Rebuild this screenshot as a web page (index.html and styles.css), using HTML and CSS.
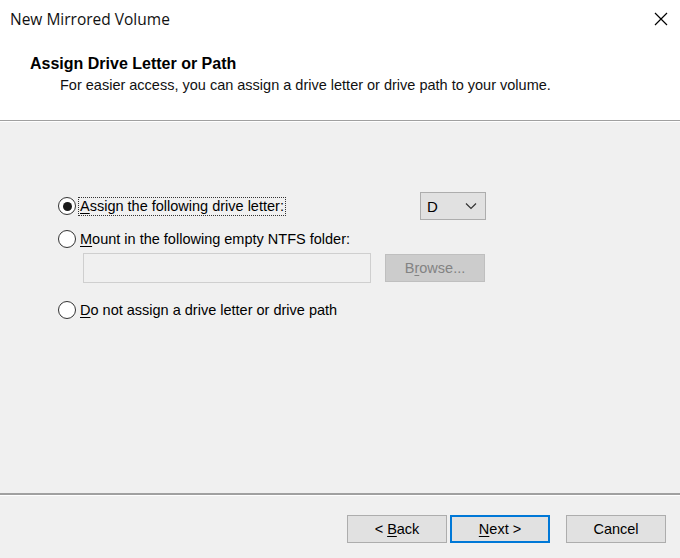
FILE: index.html
```html
<!DOCTYPE html>
<html>
<head>
<meta charset="utf-8">
<link rel="stylesheet" href="styles.css">
</head>
<body>
<div class="window">
  <div class="top">
    <div class="titlebar">
      <span class="title">New Mirrored Volume</span>
      <svg class="close" width="14" height="14" viewBox="0 0 14 14"><path d="M1 1 L13 13 M13 1 L1 13" stroke="#000" stroke-width="1.2" fill="none"/></svg>
    </div>
    <div class="header">
      <div class="h-title">Assign Drive Letter or Path</div>
      <div class="h-sub">For easier access, you can assign a drive letter or drive path to your volume.</div>
    </div>
  </div>
  <div class="body">
    <div class="row row1">
      <span class="radio checked"></span>
      <span class="label focus"><u>A</u>ssign the following drive letter:</span>
      <div class="select"><span>D</span><svg width="12" height="8" viewBox="0 0 12 8"><path d="M1 1.5 L6 6.5 L11 1.5" stroke="#333" stroke-width="1.2" fill="none"/></svg></div>
    </div>
    <div class="row row2">
      <span class="radio"></span>
      <span class="label"><u>M</u>ount in the following empty NTFS folder:</span>
    </div>
    <div class="row folder">
      <div class="input"></div>
      <div class="btn disabled"><span>B<u>r</u>owse...</span></div>
    </div>
    <div class="row row3">
      <span class="radio"></span>
      <span class="label"><u>D</u>o not assign a drive letter or drive path</span>
    </div>
  </div>
  <div class="footer">
    <div class="btn"><span>&lt; <u>B</u>ack</span></div>
    <div class="btn default"><span><u>N</u>ext &gt;</span></div>
    <div class="btn cancel"><span>Cancel</span></div>
  </div>
</div>
</body>
</html>
```
FILE: styles.css
```css
html, body {
  margin: 0;
  padding: 0;
}
body {
  font-family: "Liberation Sans", Arial, sans-serif;
  font-size: 14.5px;
  color: #000;
  background: #f0f0f0;
}
.window {
  width: 680px;
  height: 558px;
  display: flex;
  flex-direction: column;
  background: #f0f0f0;
  overflow: hidden;
}
.top {
  background: #fff;
  height: 120px;
  border-bottom: 1px solid #a0a0a0;
  box-shadow: 0 1px 0 #fff;
}
.titlebar {
  height: 38px;
  display: flex;
  align-items: center;
  justify-content: space-between;
  padding: 0 12px 0 10px;
}
.title {
  font-family: "Open Sans", "Noto Sans", sans-serif;
  font-size: 15.5px;
  color: #111;
}
.close {
  display: block;
}
.header {
  padding-top: 16px;
}
.h-title {
  padding-left: 30px;
  font-weight: bold;
  font-size: 16px;
  line-height: 20px;
}
.h-sub {
  padding-left: 60px;
  line-height: 22px;
  color: #111;
}
.body {
  flex: 1;
  padding: 71px 0 0 58px;
  border-bottom: 2px solid #a0a0a0;
  box-shadow: 0 1px 0 #fff;
}
.row {
  display: flex;
  align-items: center;
}
.row1 {
  height: 28px;
}
.row2 {
  height: 24px;
  margin-top: 7px;
}
.row3 {
  height: 24px;
  margin-top: 15px;
}
.radio {
  border: 1px solid #333;
  border-radius: 50%;
  background: #fff;
  box-sizing: border-box;
  position: relative;
  flex: none;
  width: 18px;
  height: 18px;
}
.radio.checked::after {
  content: "";
  position: absolute;
  left: 3.5px;
  top: 3.5px;
  width: 9px;
  height: 9px;
  border-radius: 50%;
  background: #1a1a1a;
}
.label {
  margin-left: 2px;
  padding: 0 1px;
  line-height: 17px;
  border: 1px solid transparent;
}
.label.focus {
  border: 1px dotted #333;
}
.select {
  margin-left: 134px;
  width: 66px;
  height: 28px;
  box-sizing: border-box;
  border: 1px solid #adadad;
  background: #e1e1e1;
  display: flex;
  align-items: center;
  justify-content: space-between;
  padding: 0 8px 0 6px;
  font-size: 15px;
}
.select svg {
  display: block;
}
.folder {
  margin-top: 2px;
  padding-left: 25px;
  height: 30px;
}
.input {
  width: 288px;
  height: 30px;
  box-sizing: border-box;
  border: 1px solid #cfcfcf;
  background: #f0f0f0;
}
.btn {
  width: 100px;
  height: 28px;
  box-sizing: border-box;
  border: 1px solid #adadad;
  background: #e1e1e1;
  display: flex;
  align-items: center;
  justify-content: center;
  font-size: 14.5px;
}
.btn.disabled {
  margin-left: 14px;
  background: #cccccc;
  border-color: #bfbfbf;
  color: #838383;
}
.footer {
  height: 63px;
  display: flex;
  align-items: center;
  padding-left: 347px;
  padding-top: 4px;
  box-sizing: border-box;
  gap: 3px;
}
.btn.default {
  border: 2px solid #0078d7;
}
.btn.cancel {
  margin-left: 13px;
}
u {
  text-decoration: underline;
  text-underline-offset: 2px;
}
```
